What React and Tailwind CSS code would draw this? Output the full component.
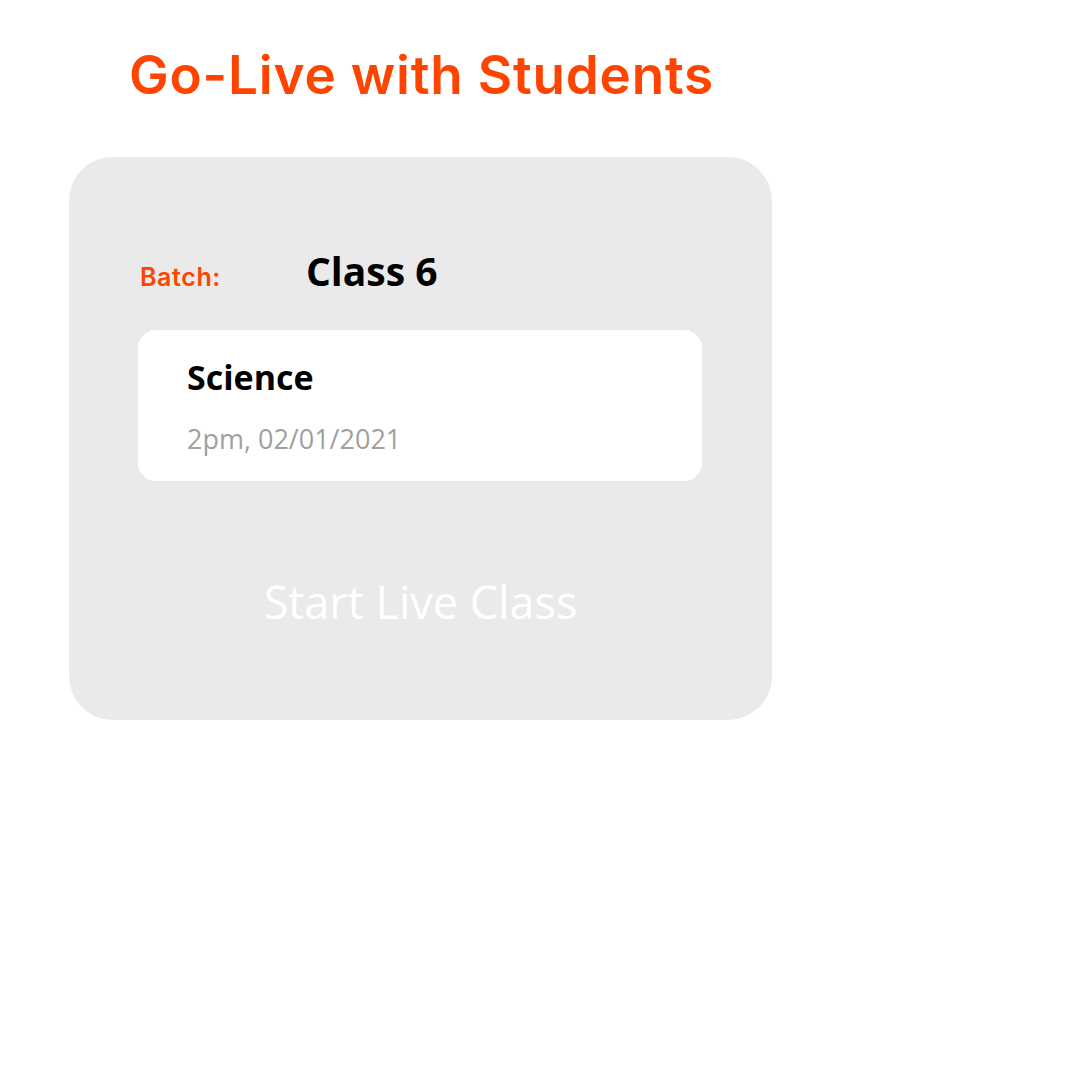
import React from 'react';

const ORANGE = 'text-[#ff4400]';

const SessionCard = () => (
  <div className="w-[564px] h-[151px] rounded-[18px] bg-white pl-[49px] pt-[24px]">
    <div className="text-[34px] font-bold leading-[46px] text-black">
      Science
    </div>
    <div className="mt-[21px] text-[27px] leading-[36px] text-[#a0a0a0]">
      2pm, 02/01/2021
    </div>
  </div>
);

export default function App() {
  return (
    <div className="w-[1080px] h-[1080px] bg-white font-['Open_Sans',sans-serif]">
      <div className="pt-[39px] pl-[129px]">
        <h1 className={`font-['Inter',sans-serif] text-[53px] font-semibold leading-[72px] tracking-[0.8px] ${ORANGE}`}>
          Go-Live with Students
        </h1>
      </div>

      <div className="ml-[69px] mt-[46px] w-[703px] h-[563px] rounded-[44px] bg-[#eaeaea] pl-[69px] pt-[88px]">
        <div className="flex items-baseline">
          <span className={`ml-[2px] w-[166px] font-['Inter',sans-serif] text-[25px] font-semibold tracking-[0.6px] ${ORANGE}`}>Batch:</span>
          <span className="text-[39px] font-bold leading-[52px] text-black">Class 6</span>
        </div>

        <div className="mt-[33px]">
          <SessionCard />
        </div>

        <div className="mt-[91px] -ml-[69px] flex justify-center">
          <span className="text-[45px] font-normal leading-[60px] text-white">Start Live Class</span>
        </div>
      </div>
    </div>
  );
}
